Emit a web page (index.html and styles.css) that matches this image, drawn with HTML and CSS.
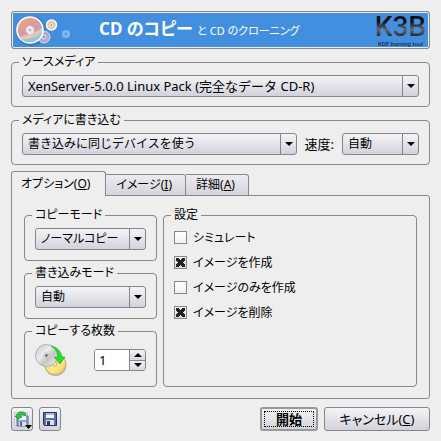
FILE: index.html
```html
<!DOCTYPE html>
<html lang="ja">
<head>
<meta charset="utf-8">
<title>CD のコピー</title>
<link rel="stylesheet" href="styles.css">
</head>
<body>
<form class="dialog">
  <header class="banner">
    <svg class="banner-art" width="60" height="34" viewBox="0 0 60 34" aria-hidden="true">
      <defs>
        <linearGradient id="disc" x1="0" y1="0" x2="0.6" y2="1">
          <stop offset="0" stop-color="#eab070"/>
          <stop offset="0.5" stop-color="#dc9a9c"/>
          <stop offset="0.8" stop-color="#c3a4c8"/>
          <stop offset="1" stop-color="#8fbbe0"/>
        </linearGradient>
      </defs>
      <circle cx="19" cy="18" r="15" fill="#2c67ad" opacity="0.5"/>
      <circle cx="32" cy="24" r="6" fill="#b5a9c4" stroke="#d3dced"/>
      <circle cx="32" cy="24" r="2" fill="#8c9cc0" stroke="#e8e8f4"/>
      <circle cx="18" cy="17" r="13" fill="url(#disc)" stroke="#fff" stroke-width="1.6"/>
      <path d="M7 24C15 22 23 20 30 15L30 19C25 25 17 26 9 27z" fill="#f4dfb8" opacity="0.6"/>
      <path d="M9 27C17 26 24 24 29 20L27 25C23 28 18 29 13 29z" fill="#8ed0dc" opacity="0.7"/>
      <circle cx="18" cy="17" r="3.5" fill="#e9d3d5" stroke="#fff"/>
      <circle cx="18" cy="17" r="1.5" fill="#7596bd" stroke="#fff" stroke-width="0.8"/>
      <circle cx="39.5" cy="12" r="5" fill="#edc3a8" stroke="#fff" stroke-width="1.5"/>
      <circle cx="39.5" cy="12" r="1.5" fill="#9b90b5" stroke="#fff"/>
      <circle cx="54" cy="21" r="4" fill="#8fbbe9" opacity="0.9"/>
      <circle cx="54" cy="21" r="1.2" fill="#5a90cf"/>
    </svg>
    <h1 class="banner-title">CD のコピー <small>と CD のクローニング</small></h1>
    <div class="brand"><strong>K3B</strong><span>KDE burning tool</span></div>
  </header>

  <fieldset class="group">
    <legend>ソースメディア</legend>
    <span class="combo combo-source"><select aria-label="ソースメディア"><option>XenServer-5.0.0 Linux Pack (完全なデータ CD-R)</option></select></span>
  </fieldset>

  <fieldset class="group">
    <legend>メディアに書き込む</legend>
    <div class="row">
      <span class="combo combo-device"><select aria-label="メディアに書き込む"><option>書き込みに同じデバイスを使う</option></select></span>
      <label for="speed">速度:</label>
      <span class="combo combo-speed"><select id="speed"><option>自動</option></select></span>
    </div>
  </fieldset>

  <div class="tabs" role="tablist">
    <button type="button" role="tab" class="tab tab-active" aria-selected="true">オプション(<u>O</u>)</button>
    <button type="button" role="tab" class="tab" aria-selected="false">イメージ(<u>I</u>)</button>
    <button type="button" role="tab" class="tab" aria-selected="false">詳細(<u>A</u>)</button>
  </div>
  <section class="panel" role="tabpanel">
    <div class="modes">
      <fieldset class="group">
        <legend>コピーモード</legend>
        <span class="combo"><select aria-label="コピーモード"><option>ノーマルコピー</option></select></span>
      </fieldset>
      <fieldset class="group">
        <legend>書き込みモード</legend>
        <span class="combo"><select aria-label="書き込みモード"><option>自動</option></select></span>
      </fieldset>
      <fieldset class="group copies">
        <legend>コピーする枚数</legend>
        <div class="row">
          <svg width="32" height="32" viewBox="0 0 32 32" aria-hidden="true">
            <defs>
              <linearGradient id="silver" x1="0" y1="0" x2="1" y2="1">
                <stop offset="0" stop-color="#c4c4c4"/>
                <stop offset="0.4" stop-color="#ececec"/>
                <stop offset="0.6" stop-color="#c6c6c6"/>
                <stop offset="1" stop-color="#f4f4f4"/>
              </linearGradient>
              <linearGradient id="gold" x1="0" y1="0" x2="1" y2="1">
                <stop offset="0" stop-color="#f2c64c"/>
                <stop offset="0.6" stop-color="#fde98e"/>
                <stop offset="1" stop-color="#efc648"/>
              </linearGradient>
            </defs>
            <circle cx="20.5" cy="21" r="11" fill="#777" opacity="0.5"/>
            <circle cx="20" cy="20" r="10.5" fill="url(#gold)" stroke="#d8b65a"/>
            <circle cx="20" cy="20" r="2" fill="#f4f4f4" stroke="#d3aa40"/>
            <circle cx="11.5" cy="11.5" r="11" fill="url(#silver)" stroke="#a5a5a5" stroke-width="0.8"/>
            <circle cx="11.5" cy="11.5" r="2.5" fill="#ddd" stroke="#c4c4c4"/>
            <circle cx="11.5" cy="11.5" r="1.2" fill="#555"/>
            <path d="M16 2C22 3 26 7 27 13h3l-5 7-6-7h4C23 9 21 5 16 2z" fill="#25e22c" stroke="#20a52a" stroke-width="0.6"/>
          </svg>
          <span class="spin">
            <input type="text" inputmode="numeric" value="1" aria-label="コピーする枚数">
            <span class="spin-buttons">
              <button type="button" class="up" aria-label="増やす"></button>
              <button type="button" class="down" aria-label="減らす"></button>
            </span>
          </span>
        </div>
      </fieldset>
    </div>
    <fieldset class="group settings">
      <legend>設定</legend>
      <label class="check"><input type="checkbox">シミュレート</label>
      <label class="check"><input type="checkbox" checked>イメージを作成</label>
      <label class="check"><input type="checkbox">イメージのみを作成</label>
      <label class="check"><input type="checkbox" checked>イメージを削除</label>
    </fieldset>
  </section>

  <footer class="actions">
    <button type="button" class="button icon-button" aria-label="設定を読み込む">
      <svg width="20" height="20" viewBox="0 0 20 20" aria-hidden="true">
        <path d="M2.500 3.500h13v13h-13z" fill="#dfe5f0" stroke="#c3cbdc"/>
        <path d="M5 7h11v10H5z" fill="#90a2c6" stroke="#5b6f9c"/>
        <path d="M7 7h7v4H7z" fill="#f3f6fb"/>
        <path d="M7 13h7v4H7z" fill="#dbe2ef"/>
        <path d="M8 13h2v4H8z" fill="#52648f"/>
        <path d="M4 8C4 3 11 1 14 5l-1 2C11 5 9 5 8 7l2 1-4 2-3-3z" fill="#27c932" stroke="#16852a" stroke-width="0.6"/>
        <path d="M13 16h7l-3.500 4z" fill="#000"/>
      </svg>
    </button>
    <button type="button" class="button icon-button" aria-label="設定を保存">
      <svg width="20" height="20" viewBox="0 0 20 20" aria-hidden="true">
        <path d="M3.500 3.500h13v13h-12l-1-1z" fill="#5a71a8" stroke="#24365f"/>
        <path d="M6 4h8v5H6z" fill="#f3f6fb"/>
        <path d="M6 4h8v2H6z" fill="#a9b8d8"/>
        <path d="M6 11h8v5H6z" fill="#dbe2ef"/>
        <path d="M7 12h3v4H7z" fill="#2b3b63"/>
      </svg>
    </button>
    <button type="submit" class="button button-default"><span>開始</span></button>
    <button type="button" class="button button-cancel">キャンセル(<u>C</u>)</button>
  </footer>
</form>
</body>
</html>
```

FILE: styles.css
```css
* { box-sizing: border-box; }

body {
  margin: 0;
  background: #eee;
  color: #000;
}

body, button, input, select {
  font: 12px/16px "Noto Sans", "Noto Sans CJK JP", sans-serif;
  font-feature-settings: "palt";
}

.dialog { padding: 11px 11px 10px; }

.banner {
  display: flex;
  align-items: center;
  height: 38px;
  padding: 0 3px 0 0;
  border: 1px solid #888;
  border-radius: 3px;
  box-shadow: inset 0 0 0 1px #e8eef6;
  background: #428fdf;
  color: #fff;
}

.banner-title {
  flex: 1;
  margin: 0 0 0 27px;
  font-size: 17px;
  line-height: 24px;
  font-weight: 700;
  white-space: nowrap;
}

.banner-title small { font-size: 11px; font-weight: 400; }

.brand {
  display: flex;
  flex-direction: column;
  align-items: center;
  font-family: Roboto, "Noto Sans", sans-serif;
  color: #1c2c46;
}

.brand strong {
  font-size: 28px;
  line-height: 28px;
  font-weight: 500;
  background: linear-gradient(#111 30%, #667 60%, #222 85%);
  background-clip: text;
  color: transparent;
}

.brand span { font-size: 6px; line-height: 6px; font-weight: 500; }

.group {
  min-width: 0;
  margin: 5px 0 0;
  padding: 5px 10px 9px;
  border: 1px solid #888;
  border-radius: 4px;
}

.group legend {
  height: 16px;
  margin-left: -3px;
  padding: 0 3px;
}

.row { display: flex; align-items: center; gap: 8px; }
.row label { font-size: 13px; }

.combo {
  position: relative;
  display: flex;
  flex: 1;
  min-width: 0;
}

.combo-speed { flex: 0 0 77px; }

.combo select {
  appearance: none;
  width: 100%;
  height: 22px;
  padding: 0 18px 0 5px;
  border: 1px solid #85868c;
  border-radius: 3px;
  background: linear-gradient(#f4f4f7, #d2d2dc);
  color: #000;
}

.combo-source select, .combo-device select { font-feature-settings: normal; }
.combo-source select { font-size: 13px; }

.combo::before {
  content: "";
  position: absolute;
  inset: 1px 16px 1px auto;
  border-left: 1px solid #85868c;
}

.combo::after {
  content: "";
  position: absolute;
  top: 9px;
  right: 4px;
  border: 4px solid transparent;
  border-top-color: #000;
  border-bottom: 0;
}

.tabs { display: flex; align-items: flex-end; margin-top: 6px; }

.tab {
  height: 22px;
  padding: 0 13px 0 10px;
  border: 1px solid #888;
  border-left: 0;
  border-radius: 0 3px 0 0;
  background: linear-gradient(#ececf0, #d4d4de);
}

.tab-active {
  position: relative;
  height: 25px;
  padding: 0 15px 0 9px;
  border-left: 1px solid #888;
  border-bottom: 0;
  border-radius: 3px 3px 0 0;
  background: #eee;
}

.panel {
  display: flex;
  gap: 6px;
  margin-top: -1px;
  padding: 11px 12px;
  border: 1px solid #888;
  border-radius: 0 3px 3px 3px;
}

.modes { flex: 0 0 133px; }
.modes .group { padding-bottom: 10px; }
.modes .group + .group { margin-top: 4px; }
.modes .group:first-child, .settings { margin-top: 0; }
.copies .row { justify-content: space-between; }

.settings { flex: 1; padding-top: 2px; }

.spin {
  display: flex;
  width: 52px;
  height: 22px;
  border: 1px solid #85868c;
  border-radius: 3px;
  background: #fff;
  overflow: hidden;
}

.spin input {
  flex: 1;
  min-width: 0;
  padding: 0 4px;
  border: 0;
  background: #fff;
  font-size: 13px;
}

.spin-buttons {
  display: flex;
  flex-direction: column;
  width: 16px;
  border-left: 1px solid #85868c;
}

.spin-buttons button {
  display: grid;
  place-items: center;
  flex: 1;
  padding: 0;
  border: 0;
  background: linear-gradient(#f2f2f5, #d6d6df);
}

.spin-buttons .down { border-top: 1px solid #85868c; }

.spin-buttons button::before { content: ""; border: 4px solid transparent; }
.spin-buttons .up::before { border-bottom-color: #000; border-top: 0; }
.spin-buttons .down::before { border-top-color: #000; border-bottom: 0; }

.check {
  display: flex;
  align-items: center;
  gap: 6px;
  height: 25px;
}

.check input {
  appearance: none;
  display: grid;
  place-items: center;
  width: 13px;
  height: 13px;
  margin: 0;
  border: 1px solid #85868c;
  background: linear-gradient(#fff, #f0f0f0);
}

.check input:checked { background: linear-gradient(#f4f4f7, #d8d8e0); }

.check input:checked::before {
  content: "";
  width: 9px;
  height: 9px;
  background:
    linear-gradient(45deg, transparent 37%, #222 37% 63%, transparent 63%),
    linear-gradient(-45deg, transparent 37%, #222 37% 63%, transparent 63%);
}

.actions { display: flex; gap: 6px; margin-top: 8px; }

.button {
  height: 24px;
  padding: 0;
  border: 1px solid #85868c;
  border-radius: 3px;
  background: linear-gradient(#f4f4f7, #d2d2dc);
  color: #000;
  font-size: 13px;
}

.icon-button { display: grid; place-items: center; width: 22px; }

.button-default {
  width: 58px;
  margin-left: auto;
  padding: 2px;
  border: 2px solid #999;
  font-weight: 700;
}

.button-default span { display: block; border: 1px dotted #000; line-height: 14px; }

.button-cancel { width: 106px; }
```
